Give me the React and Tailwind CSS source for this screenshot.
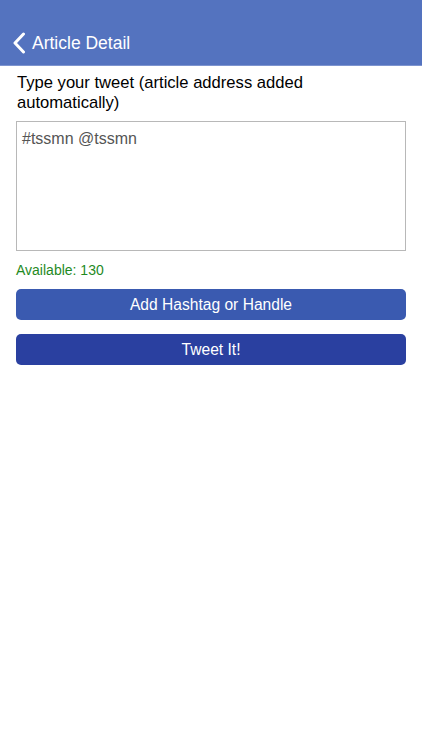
export default function App() {
  const font = { fontFamily: '"Liberation Sans", Arial, sans-serif' };
  return (
    <div className="w-[422px] h-[750px] bg-white" style={font}>
      <div className="h-[66px] bg-[#5473bf] border-b border-[#7d94cf] flex items-end pb-[11px]">
        <div className="flex items-center pl-[12px] text-white">
          <svg width="14" height="22" viewBox="0 0 14 22" className="mr-[6px]">
            <path d="M11.5 2 L3 11 L11.5 20" fill="none" stroke="white" strokeWidth="3" strokeLinecap="round" strokeLinejoin="round" />
          </svg>
          <span className="text-[17.5px] leading-[22px]">Article Detail</span>
        </div>
      </div>
      <div className="px-[16px] pt-[7px]">
        <div className="text-[16.6px] leading-[20px] text-black px-[1px]">
          Type your tweet (article address added automatically)
        </div>
        <div className="mt-[8px] h-[130px] border border-[#b8b8b8] px-[5px] pt-[7px] text-[16px] leading-[20px] text-[#555555]">
          #tssmn @tssmn
        </div>
        <div className="mt-[11px] text-[14px] leading-[17px] text-[#1f8a1f]">Available: 130</div>
        <div className="mt-[10px] h-[31px] rounded-[5px] bg-[#3a5ab0] text-white text-[15.6px] flex items-center justify-center">
          Add Hashtag or Handle
        </div>
        <div className="mt-[14px] h-[31px] rounded-[5px] bg-[#2a40a0] text-white text-[15.6px] flex items-center justify-center">
          Tweet It!
        </div>
      </div>
    </div>
  );
}
